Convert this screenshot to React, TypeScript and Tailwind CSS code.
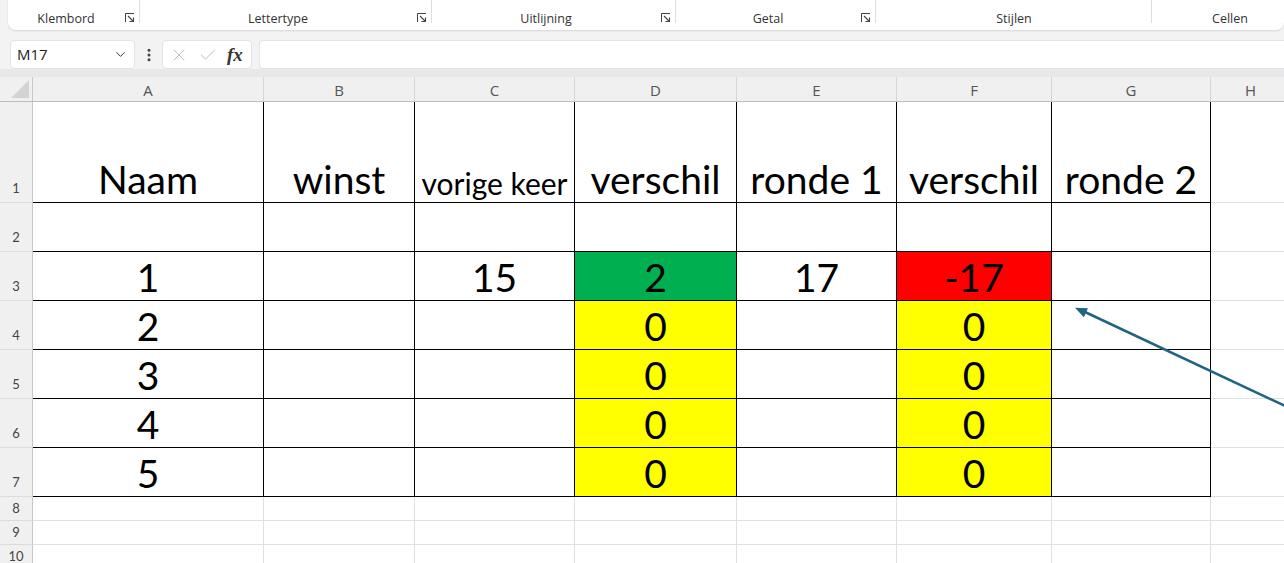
import { Check, ChevronDown, EllipsisVertical, X } from "lucide-react";

const COLS = ["A", "B", "C", "D", "E", "F", "G", "H"];
const COL_WIDTHS = [231, 151, 160, 162, 160, 155, 159, 80];
const ROW_HEIGHTS = [101, 49, 49, 49, 49, 49, 49, 24, 24, 24];

type Cell = { v?: string; fill?: string; small?: boolean };

const DATA: Cell[][] = [
  [
    { v: "Naam" },
    { v: "winst" },
    { v: "vorige keer", small: true },
    { v: "verschil" },
    { v: "ronde 1" },
    { v: "verschil" },
    { v: "ronde 2" },
  ],
  [],
  [
    { v: "1" },
    {},
    { v: "15" },
    { v: "2", fill: "bg-[#00b050]" },
    { v: "17" },
    { v: "-17", fill: "bg-[#ff0000]" },
    {},
  ],
  [{ v: "2" }, {}, {}, { v: "0", fill: "bg-[#ffff00]" }, {}, { v: "0", fill: "bg-[#ffff00]" }],
  [{ v: "3" }, {}, {}, { v: "0", fill: "bg-[#ffff00]" }, {}, { v: "0", fill: "bg-[#ffff00]" }],
  [{ v: "4" }, {}, {}, { v: "0", fill: "bg-[#ffff00]" }, {}, { v: "0", fill: "bg-[#ffff00]" }],
  [{ v: "5" }, {}, {}, { v: "0", fill: "bg-[#ffff00]" }, {}, { v: "0", fill: "bg-[#ffff00]" }],
];

const GROUPS = [
  { label: "Klembord", w: 132, launcher: true },
  { label: "Lettertype", w: 292, launcher: true },
  { label: "Uitlijning", w: 244, launcher: true },
  { label: "Getal", w: 200, launcher: true },
  { label: "Stijlen", w: 276, launcher: false },
  { label: "Cellen", w: 156, launcher: false },
];

function Launcher() {
  return (
    <svg width="10" height="10" viewBox="0 0 10 10" className="text-[#444]">
      <path d="M0.5 9 V0.5 H9" fill="none" stroke="currentColor" strokeWidth="1" />
      <path d="M3 3 L8.5 8.5" stroke="currentColor" strokeWidth="1.1" />
      <path d="M8.5 4.5 V8.5 H4.5" fill="none" stroke="currentColor" strokeWidth="1.1" />
    </svg>
  );
}

function Ribbon() {
  return (
    <div className="ml-[8px] flex h-[30px] rounded-b-[8px] bg-white shadow-[0_1px_2px_rgba(0,0,0,0.12)]">
      {GROUPS.map((g, i) => (
        <div key={g.label} className="relative flex h-full shrink-0 items-end" style={{ width: g.w }}>
          <div
            className={`flex flex-1 justify-center pb-[5px] text-[12.5px] leading-none text-[#333] ${g.launcher ? "pr-[16px]" : ""}`}
          >
            {g.label}
          </div>
          {g.launcher && (
            <div className="absolute right-[5px] top-[13px]">
              <Launcher />
            </div>
          )}
          {i < GROUPS.length - 1 && (
            <div className="absolute right-0 top-0 h-[23px] w-px bg-[#dedede]" />
          )}
        </div>
      ))}
    </div>
  );
}

function FormulaBar() {
  return (
    <div className="flex h-[39px] items-start pt-[10px]">
      <div className="ml-[10px] flex h-[29px] w-[125px] items-center rounded-[4px] border border-[#e3e3e3] bg-white pl-[6px] pr-[6px]">
        <span className="flex-1 text-[15px] text-[#222]">M17</span>
        <ChevronDown size={15} strokeWidth={1.6} className="text-[#333]" />
      </div>
      <div className="flex h-[29px] w-[27px] items-center justify-center">
        <EllipsisVertical size={16} strokeWidth={2.6} className="text-[#444]" />
      </div>
      <div className="flex h-[29px] w-[90px] items-center gap-[9px] rounded-[4px] border border-[#e3e3e3] bg-white pl-[6px]">
        <X size={20} strokeWidth={1.2} className="text-[#bdbdbd]" />
        <Check size={20} strokeWidth={1.2} className="text-[#bdbdbd]" />
        <span className="font-['Liberation_Serif',serif] text-[19px] font-bold italic leading-none text-[#333]">
          fx
        </span>
      </div>
      <div className="ml-[7px] h-[29px] flex-1 rounded-l-[4px] border border-r-0 border-[#e3e3e3] bg-white" />
    </div>
  );
}

function HeaderRow() {
  return (
    <div className="flex h-[25px]">
      <div className="relative w-[33px] shrink-0 border-b border-r border-b-[#bdbdbd] border-r-[#c8c8c8] bg-[#f0f0f0]">
        <svg width="18" height="18" className="absolute bottom-[3px] right-[3px]">
          <polygon points="18,0 18,18 0,18" fill="#d3d3d3" />
        </svg>
      </div>
      {COLS.map((c, i) => (
        <div
          key={c}
          className="flex shrink-0 items-center justify-center border-b border-r border-b-[#bdbdbd] border-r-[#d6d6d6] bg-[#f0f0f0] pt-[2px] text-[15px] text-[#555]"
          style={{ width: COL_WIDTHS[i] }}
        >
          {c}
        </div>
      ))}
    </div>
  );
}

function GridRow({ r }: { r: number }) {
  const h = ROW_HEIGHTS[r];
  const inTable = r < 7;
  const row = DATA[r] ?? [];
  return (
    <div className="flex" style={{ height: h }}>
      <div
        className={`flex w-[33px] shrink-0 items-end justify-center border-b border-r border-b-[#dcdcdc] border-r-[#c8c8c8] bg-[#f0f0f0] text-[13px] leading-none text-[#444] ${h > 30 ? "pb-[7px]" : "pb-[5px]"}`}
      >
        {r + 1}
      </div>
      {COLS.map((c, ci) => {
        const cell = row[ci] ?? {};
        const black = inTable && ci < 7;
        const right = black ? "border-r-black" : "border-r-[#e1e1e1]";
        const bottom = black ? "border-b-black" : "border-b-[#e1e1e1]";
        return (
          <div
            key={c}
            className={`flex shrink-0 items-end justify-center border-b border-r leading-none text-black ${right} ${bottom} ${cell.fill ?? "bg-white"} ${cell.small ? "pb-[4px] text-[30px]" : "pb-[3px] text-[39px]"}`}
            style={{ width: COL_WIDTHS[ci] }}
          >
            {cell.v}
          </div>
        );
      })}
    </div>
  );
}

export default function App() {
  return (
    <div className="relative h-[563px] w-[1284px] overflow-hidden bg-[#f3f3f3] font-['Open_Sans',sans-serif]">
      <Ribbon />
      <FormulaBar />
      <div className="h-[8px] bg-[#e7e8ea]" />
      <HeaderRow />
      <div className="font-['Lato',sans-serif]">
        {ROW_HEIGHTS.map((_, r) => (
          <GridRow key={r} r={r} />
        ))}
      </div>
      <svg width="1284" height="563" className="pointer-events-none absolute left-0 top-0">
        <line x1="1300" y1="413" x2="1085" y2="312" stroke="#1f6483" strokeWidth="2.5" />
        <polygon points="1075,307.7 1083.8,317.3 1088,308.3" fill="#1f6483" />
      </svg>
    </div>
  );
}
